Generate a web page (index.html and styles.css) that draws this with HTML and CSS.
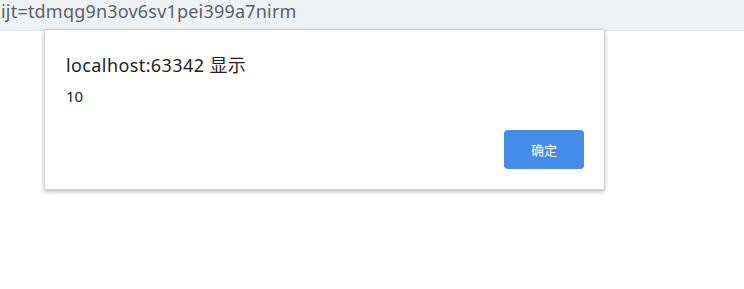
FILE: index.html
```html
<!DOCTYPE html>
<html lang="zh">
<head>
    <meta charset="UTF-8">
    <title>alert</title>
    <link rel="stylesheet" href="styles.css">
</head>
<body>
    <div class="address-bar">
        <span class="url">ijt=tdmqg9n3ov6sv1pei399a7nirm</span>
    </div>

    <div class="dialog">
        <div class="dialog-title">localhost:63342 显示</div>
        <div class="dialog-message">10</div>
        <div class="dialog-buttons">
            <button class="ok-button">确定</button>
        </div>
    </div>
</body>
</html>
```

FILE: styles.css
```css
body {
    margin: 0;
    background: #fff;
    font-family: "Noto Sans", "Noto Sans CJK SC", sans-serif;
    width: 744px;
    height: 289px;
    overflow: hidden;
    position: relative;
}

.address-bar {
    height: 31px;
    background: #eff2f5;
    border-bottom: 1px solid #dfe2e6;
    box-sizing: border-box;
    display: flex;
    align-items: flex-start;
    padding-left: 1px;
}

.url {
    font-size: 18px;
    line-height: 22px;
    color: #5b6064;
    letter-spacing: 0.2px;
}

.dialog {
    position: absolute;
    left: 44px;
    top: 29px;
    width: 561px;
    height: 161px;
    box-sizing: border-box;
    background: #fff;
    border: 1px solid #d0d0d0;
    border-radius: 2px;
    box-shadow: 0 2px 4px rgba(0,0,0,0.25);
    padding: 22px 20px 0 21px;
}

.dialog-title {
    font-size: 18px;
    color: #202124;
    line-height: 26px;
    letter-spacing: 0.4px;
}

.dialog-message {
    margin-top: 9px;
    font-size: 15px;
    color: #202124;
    line-height: 18px;
}

.dialog-buttons {
    display: flex;
    justify-content: flex-end;
    margin-top: 25px;
}

.ok-button {
    width: 80px;
    height: 39px;
    border: none;
    border-radius: 4px;
    background: #448bea;
    color: #fff;
    font-family: "Noto Sans CJK SC", sans-serif;
    font-size: 13px;
    cursor: pointer;
}
```
